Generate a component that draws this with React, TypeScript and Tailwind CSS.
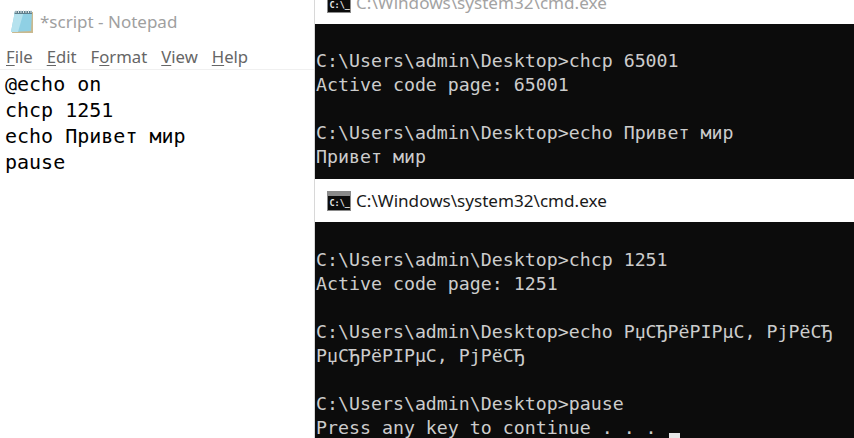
import React from 'react';

const NotepadIcon = () => (
  <svg width="24" height="26" viewBox="0 0 24 26" className="shrink-0">
    <path d="M5 3 L23 3 L23 24 L2 24 Z" fill="#c9b98f" />
    <path d="M5 2 L22 2 L21 22 L1 23 Z" fill="#8fd0e4" />
    <path d="M5 2 L14 2 L8 23 L1 23 Z" fill="#b5e2ee" />
    <path d="M5 2 L22 2 L22 5 L4.500 5 Z" fill="#5f7f8c" />
    <path d="M6 1 V4 M8.500 1 V4 M11 1 V4 M13.500 1 V4 M16 1 V4 M18.500 1 V4 M21 1 V4" stroke="#dfe8ea" strokeWidth="1" />
  </svg>
);

const CmdIcon = () => (
  <svg width="24" height="20" viewBox="0 0 24 20" className="shrink-0">
    <rect x="0" y="0" width="24" height="20" fill="#8a8a8a" />
    <rect x="1" y="5" width="22" height="14" fill="#0c0c0c" />
    <text x="2.500" y="15" fontSize="8.500" fontWeight="700" fill="#e8e8e8" fontFamily="'DejaVu Sans Mono', monospace">C:\_</text>
  </svg>
);

const CmdTitle = ({ faded = false }: { faded?: boolean }) => (
  <div className="flex h-[43px] shrink-0 items-center gap-[5px] bg-white pl-[12px]">
    <CmdIcon />
    <span className={`font-['Noto_Sans',sans-serif] text-[17.1px] ${faded ? 'text-[#a3a3a3]' : 'text-[#1a1a1a]'}`}>C:\Windows\system32\cmd.exe</span>
  </div>
);

const menuClass = 'underline decoration-1 underline-offset-2';

export default function App() {
  return (
    <div className="flex h-[438px] w-[854px] overflow-hidden bg-white">
      {/* notepad */}
      <div className="flex w-[315px] shrink-0 flex-col border-r border-[#d8d8d8] bg-white">
        <div className="flex h-[43px] items-center gap-[6px] pl-[10px]">
          <NotepadIcon />
          <span className="font-['Noto_Sans',sans-serif] text-[17px] text-[#a0a0a0]">*script - Notepad</span>
        </div>
        <div className="flex h-[27px] items-center gap-[14px] border-b border-[#f0f0f0] pl-[6px] pt-[2px] font-['Noto_Sans',sans-serif] text-[16.7px] text-[#666666]">
          <span><span className={menuClass}>F</span>ile</span>
          <span><span className={menuClass}>E</span>dit</span>
          <span>F<span className={menuClass}>o</span>rmat</span>
          <span><span className={menuClass}>V</span>iew</span>
          <span><span className={menuClass}>H</span>elp</span>
        </div>
        <pre className="pl-[5px] pt-px font-['DejaVu_Sans_Mono',monospace] text-[20px] leading-[26px] text-black">{`@echo on
chcp 1251
echo Привет мир
pause`}</pre>
      </div>

      {/* cmd windows */}
      <div className="flex min-w-0 flex-1 flex-col bg-[#0c0c0c]">
        <div className="h-6 shrink-0 overflow-hidden bg-white">
          <div className="-mt-[19px]">
            <CmdTitle faded />
          </div>
        </div>
        <pre className="h-[155px] shrink-0 overflow-hidden pt-px pl-px font-['DejaVu_Sans_Mono',monospace] text-[18.25px] leading-6 text-[#cccccc]">{`
C:\\Users\\admin\\Desktop>chcp 65001
Active code page: 65001

C:\\Users\\admin\\Desktop>echo Привет мир
Привет мир`}</pre>
        <CmdTitle />
        <pre className="min-h-0 flex-1 overflow-hidden pt-[2px] pl-px font-['DejaVu_Sans_Mono',monospace] text-[18.25px] leading-6 text-[#cccccc]">{`
C:\\Users\\admin\\Desktop>chcp 1251
Active code page: 1251

C:\\Users\\admin\\Desktop>echo РџСЂРёРІРµС‚ РјРёСЂ
РџСЂРёРІРµС‚ РјРёСЂ

C:\\Users\\admin\\Desktop>pause
Press any key to continue . . . `}<span className="ml-[1px] inline-block h-[5px] w-[11px] translate-y-[4px] bg-[#e6e6e6] align-baseline" /></pre>
      </div>
    </div>
  );
}
